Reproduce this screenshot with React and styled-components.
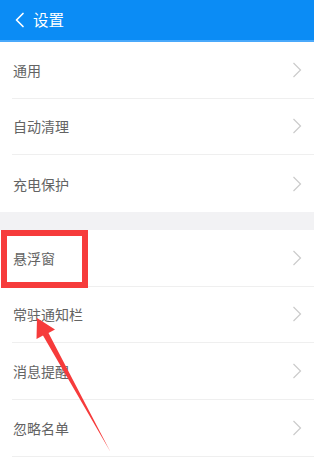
import React from "react";
import styled, { createGlobalStyle } from "styled-components";

const Global = createGlobalStyle`
  html, body {
    margin: 0;
    padding: 0;
    overflow: hidden;
    background: #ffffff;
    font-family: "Noto Sans CJK SC", "Noto Sans", sans-serif;
  }
`;

const Page = styled.div`
  position: relative;
  width: 314px;
  height: 472px;
  overflow: hidden;
  background: #ffffff;
`;

const Header = styled.header`
  height: 40px;
  background: #0b8cf5;
  border-bottom: 2px solid #4aa9fb;
  display: flex;
  align-items: center;
  padding-left: 14px;
  gap: 8px;
`;

const Title = styled.span`
  color: #ffffff;
  font-size: 15.5px;
  line-height: 1;
`;

const Section = styled.div`
  background: #ffffff;
`;

const Gap = styled.div`
  height: 18px;
  background: #f2f2f4;
`;

const Row = styled.div`
  position: relative;
  height: 56.67px;
  box-sizing: border-box;
  margin-left: 12px;
  padding-right: 12px;
  border-bottom: ${(p) => (p.$last ? "none" : "1px solid #efefef")};
  display: flex;
  align-items: center;
  justify-content: space-between;
`;

const Label = styled.span`
  color: #636363;
  font-size: 14px;
  padding-left: 1px;
`;

const Highlight = styled.div`
  position: absolute;
  left: -11px;
  top: 0;
  width: 87px;
  height: 58px;
  box-sizing: border-box;
  border: 6px solid #f63b3b;
  pointer-events: none;
`;

const ArrowLayer = styled.svg`
  position: absolute;
  left: 0;
  top: 0;
  pointer-events: none;
`;

const Chevron = () => (
  <svg width="10" height="16" viewBox="0 0 10 16">
    <path d="M1.5 1 L8.5 8 L1.5 15" fill="none" stroke="#cbcbcb" strokeWidth="1.2" />
  </svg>
);

const BackIcon = () => (
  <svg width="11" height="16" viewBox="0 0 11 16">
    <path d="M9 1.5 L2.5 8 L9 14.5" fill="none" stroke="#ffffff" strokeWidth="1.7" strokeLinecap="round" strokeLinejoin="round" />
  </svg>
);

const first = ["通用", "自动清理", "充电保护"];
const second = ["悬浮窗", "常驻通知栏", "消息提醒", "忽略名单", ""];

export default function App() {
  return (
    <Page>
      <Global />
      <Header>
        <BackIcon />
        <Title>设置</Title>
      </Header>
      <Section>
        {first.map((t, i) => (
          <Row key={t} $last={i === first.length - 1}>
            <Label>{t}</Label>
            <Chevron />
          </Row>
        ))}
      </Section>
      <Gap />
      <Section>
        {second.map((t, i) => (
          <Row key={i}>
            <Label>{t}</Label>
            {t && <Chevron />}
            {i === 0 && <Highlight />}
          </Row>
        ))}
      </Section>
      <ArrowLayer width="314" height="472" viewBox="0 0 314 472">
        <polygon
          points="37,318 55,329.5 48.5,333 110.5,452 43,335.5 36.5,339"
          fill="#f63b3b"
        />
      </ArrowLayer>
    </Page>
  );
}
